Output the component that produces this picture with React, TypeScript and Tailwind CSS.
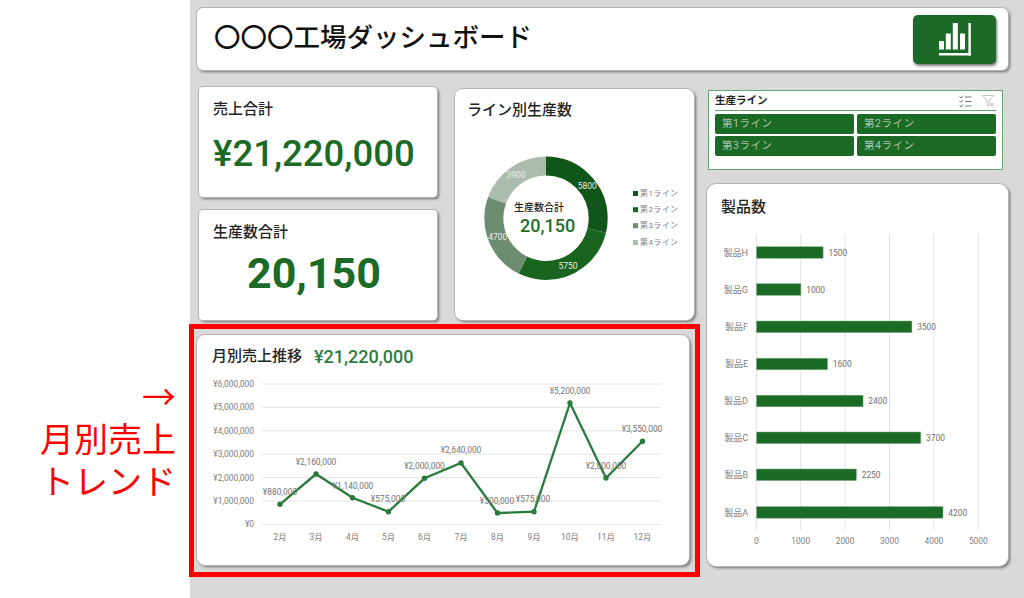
const months = [
  { label: "2月", x: 280, y: 504.3, value: "¥880,000", lx: 280, ly: 492 },
  { label: "3月", x: 316, y: 474, value: "¥2,160,000", lx: 316, ly: 462 },
  { label: "4月", x: 352.5, y: 497.7, value: "¥1,140,000", lx: 353, ly: 486 },
  { label: "5月", x: 388.5, y: 511.7, value: "¥575,000", lx: 388, ly: 499 },
  { label: "6月", x: 424.5, y: 478.3, value: "¥2,000,000", lx: 424.5, ly: 465.5 },
  { label: "7月", x: 461, y: 463, value: "¥2,640,000", lx: 461, ly: 450 },
  { label: "8月", x: 497.5, y: 513, value: "¥500,000", lx: 497, ly: 501 },
  { label: "9月", x: 534, y: 511.7, value: "¥575,000", lx: 533, ly: 499 },
  { label: "10月", x: 570, y: 403, value: "¥5,200,000", lx: 570, ly: 391 },
  { label: "11月", x: 606, y: 478, value: "¥2,000,000", lx: 606, ly: 465.7 },
  { label: "12月", x: 642.5, y: 441.3, value: "¥3,550,000", lx: 642, ly: 429 },
];

const yTicks = ["¥6,000,000", "¥5,000,000", "¥4,000,000", "¥3,000,000", "¥2,000,000", "¥1,000,000", "¥0"];

const products = [
  { name: "製品H", value: 1500, y: 246.7 },
  { name: "製品G", value: 1000, y: 283.7 },
  { name: "製品F", value: 3500, y: 321 },
  { name: "製品E", value: 1600, y: 358.2 },
  { name: "製品D", value: 2400, y: 395.2 },
  { name: "製品C", value: 3700, y: 432 },
  { name: "製品B", value: 2250, y: 469 },
  { name: "製品A", value: 4200, y: 506.6 },
];

const lines = [
  { name: "第1ライン", value: 5800, color: "#10561a", lx: 587.3, ly: 186.3 },
  { name: "第2ライン", value: 5750, color: "#19651f", lx: 568, ly: 265.7 },
  { name: "第3ライン", value: 4700, color: "#6c8d70", lx: 497.7, ly: 237.3 },
  { name: "第4ライン", value: 3900, color: "#abbbae", lx: 516, ly: 175.3 },
];

const cardShadow = "shadow-[0_0_0_1px_#b4b4b4,2px_2px_3px_#6f6f6f]";

const DonutChart = () => {
  let offset = 0;
  return (
    <svg viewBox="455 131 239 160" width={239} height={160} className="block">
      {lines.map((l) => {
        const arc = (
          <circle
            key={l.name}
            cx={546}
            cy={218.3}
            r={52.2}
            fill="none"
            stroke={l.color}
            strokeWidth={19}
            pathLength={20150}
            strokeDasharray={`${l.value} ${20150 - l.value}`}
            strokeDashoffset={-offset}
            transform="rotate(-90 546 218.3)"
          />
        );
        offset += l.value;
        return arc;
      })}
      {lines.map((l) => (
        <text key={l.name} x={l.lx} y={l.ly} fontSize={8.5} fill="#e8eee8" textAnchor="middle" dominantBaseline="central">
          {l.value}
        </text>
      ))}
      <text x={539} y={207.7} fontSize={10} fontWeight={500} fill="#222" textAnchor="middle" dominantBaseline="central">
        生産数合計
      </text>
      <text x={547.7} y={225.7} fontSize={18} fontWeight={500} fill="#1f6f2b" textAnchor="middle" dominantBaseline="central">
        20,150
      </text>
      {lines.map((l, i) => (
        <g key={l.name}>
          <rect x={633} y={[191, 207.2, 223.2, 240][i]} width={5} height={5} fill={l.color} />
          <text x={640} y={[193.5, 209.7, 225.7, 242.3][i]} fontSize={8} letterSpacing={0.4} fill="#808080" dominantBaseline="central">
            {l.name}
          </text>
        </g>
      ))}
    </svg>
  );
};

const SalesChart = () => (
  <svg viewBox="197 377 492 172" width={492} height={172} className="block">
    {yTicks.map((t, i) => {
      const y = 384 + i * 23.4;
      return (
        <g key={t}>
          <line x1={262} x2={661} y1={y} y2={y} stroke="#e4e4e4" strokeWidth={1} />
          <text x={254} y={y} fontSize={8.4} fill="#808080" textAnchor="end" dominantBaseline="central">
            {t}
          </text>
        </g>
      );
    })}
    <polyline
      points={months.map((m) => `${m.x},${m.y}`).join(" ")}
      fill="none"
      stroke="#2a7a3b"
      strokeWidth={2.3}
    />
    {months.map((m) => (
      <g key={m.label}>
        <circle cx={m.x} cy={m.y} r={2.7} fill="#2a7a3b" />
        <text x={m.lx} y={m.ly} fontSize={8.4} fill="#757575" textAnchor="middle" dominantBaseline="central">
          {m.value}
        </text>
        <text x={m.x} y={537} fontSize={8.4} fill="#808080" textAnchor="middle" dominantBaseline="central">
          {m.label}
        </text>
      </g>
    ))}
  </svg>
);

const ProductChart = () => (
  <svg viewBox="707 230 301 320" width={301} height={320} className="block">
    {[0, 1000, 2000, 3000, 4000, 5000].map((v) => {
      const x = 756.3 + (v / 1000) * 44.4;
      return (
        <g key={v}>
          <line x1={x} x2={x} y1={234} y2={530} stroke="#e2e2e2" strokeWidth={1} />
          <text x={x} y={541} fontSize={8.4} fill="#808080" textAnchor="middle" dominantBaseline="central">
            {v}
          </text>
        </g>
      );
    })}
    {products.map((p) => {
      const w = (p.value / 1000) * 44.4;
      return (
        <g key={p.name}>
          <rect x={756.5} y={p.y} width={w} height={11.6} fill="#1b6a25" stroke="#7fb088" strokeWidth={0.5} />
          <text x={748} y={p.y + 6} fontSize={9} fill="#808080" textAnchor="end" dominantBaseline="central">
            {p.name}
          </text>
          <text x={756.3 + w + 5.5} y={p.y + 6} fontSize={8.4} fill="#707070" dominantBaseline="central">
            {p.value}
          </text>
        </g>
      );
    })}
  </svg>
);

const App = () => {
  return (
    <div className="flex w-[1024px] h-[598px] overflow-hidden bg-white font-['Roboto','Noto_Sans_CJK_JP',sans-serif]">
      <aside className="w-[190px] shrink-0 pt-[375px] pr-[14px] text-right text-[34px] leading-[42px] text-[#ff0000] font-['Noto_Sans_CJK_JP',sans-serif]">
        <div>→</div>
        <div>月別売上</div>
        <div>トレンド</div>
      </aside>

      <main className="flex-1 bg-[#d9d9d9] pl-[7px] pt-[8px]">
        <header className={`flex items-center justify-between w-[811px] h-[62px] pl-[17px] pr-[12px] bg-white rounded-[6px] ${cardShadow}`}>
          <h1 className="text-[26.5px] font-medium text-[#111] -mt-[3px]">〇〇〇工場ダッシュボード</h1>
          <div className="flex items-center justify-center w-[83px] h-[49px] rounded-[5px] bg-[#1b6a25] shadow-[1px_2px_3px_#777]">
            <svg viewBox="0 0 32 33" width={32} height={33} fill="#ffffff">
              <rect x={0} y={18} width={5} height={8.5} />
              <rect x={6.8} y={10.5} width={5} height={16} />
              <rect x={13.8} y={0} width={5} height={26.5} />
              <rect x={21} y={10.5} width={5} height={16} />
              <rect x={29.4} y={0} width={2.4} height={32.5} />
              <rect x={0} y={30} width={31.8} height={2.5} />
            </svg>
          </div>
        </header>

        <div className="flex mt-[17px]">
          <div className="w-[497px]">
            <div className="flex pl-[2px] gap-[18px]">
              <div className="flex flex-col gap-[13px] w-[238px]">
                <section className={`h-[110px] rounded-[4px] bg-white ${cardShadow}`}>
                  <div className="flex items-center h-[44px] pl-[14px] text-[15px] font-medium text-[#222]">売上合計</div>
                  <div className="flex items-center h-[46px] pl-[14px] text-[36.5px] font-medium text-[#1b6a25]">¥21,220,000</div>
                </section>
                <section className={`h-[110px] rounded-[4px] bg-white ${cardShadow}`}>
                  <div className="flex items-center h-[44px] pl-[14px] text-[15px] font-medium text-[#222]">生産数合計</div>
                  <div className="flex items-center h-[38px] pl-[48px] text-[43px] font-bold text-[#1b6a25]">20,150</div>
                </section>
              </div>
              <section className={`w-[239px] h-[231px] mt-[2px] rounded-[8px] bg-white ${cardShadow}`}>
                <div className="flex items-center h-[42px] pl-[12px] text-[15px] font-medium text-[#222]">ライン別生産数</div>
                <DonutChart />
              </section>
            </div>

            <section className={`relative w-[492px] h-[230px] mt-[15px] rounded-[8px] bg-white ${cardShadow}`}>
              <div className="flex items-center gap-[12px] h-[42px] pl-[15px]">
                <span className="text-[15px] font-medium text-[#222]">月別売上推移</span>
                <span className="text-[18px] font-medium text-[#2e7d3e]">¥21,220,000</span>
              </div>
              <SalesChart />
              <div className="absolute -left-[8px] -top-[11px] -right-[11px] -bottom-[12px] border-[5px] border-[#ff0000]" />
            </section>
          </div>

          <div className="w-[301px] ml-[13px]">
            <section className="w-[295px] h-[80px] mt-[3px] ml-[1px] px-[6px] bg-white border border-[#6aa56f]">
              <div className="flex items-center justify-between h-[20px] border-b border-[#6aa56f]">
                <span className="text-[10.5px] font-bold text-[#222]">生産ライン</span>
                <div className="flex items-center gap-[10px] pr-[2px]">
                  <svg viewBox="0 0 13 12" width={13} height={12} fill="none" stroke="#777" strokeWidth={1}>
                    <path d="M0.5 1.5 L2 3 L4 0.5" />
                    <path d="M0.5 6 L2 7.5 L4 5" />
                    <path d="M0.5 10.5 L2 12 L4 9.5" />
                    <path d="M6 2 H12.5 M6 6.5 H12.5 M6 11 H12.5" />
                  </svg>
                  <svg viewBox="0 0 12 12" width={12} height={12} fill="none" stroke="#c4c4c4" strokeWidth={1}>
                    <path d="M0.5 0.5 H11.5 L7 5.5 V11.5 L5 10 V5.5 Z" />
                    <path d="M8.5 8 L11.5 11 M11.5 8 L8.5 11" stroke="#a8a8a8" />
                  </svg>
                </div>
              </div>
              <div className="grid grid-cols-2 gap-x-[3px] gap-y-[2px] mt-[3px]">
                {lines.map((l) => (
                  <button key={l.name} className="flex items-center h-[20px] pl-[7px] rounded-[2px] bg-[#1b6a25] text-[10.5px] tracking-[0.5px] text-[#a9c6ab]">
                    {l.name}
                  </button>
                ))}
              </div>
            </section>

            <section className={`w-[301px] h-[382px] mt-[14px] rounded-[9px] bg-white ${cardShadow}`}>
              <div className="flex items-center h-[46px] pl-[14px] text-[15px] font-medium text-[#222]">製品数</div>
              <ProductChart />
            </section>
          </div>
        </div>
      </main>
    </div>
  );
};

export default App;
